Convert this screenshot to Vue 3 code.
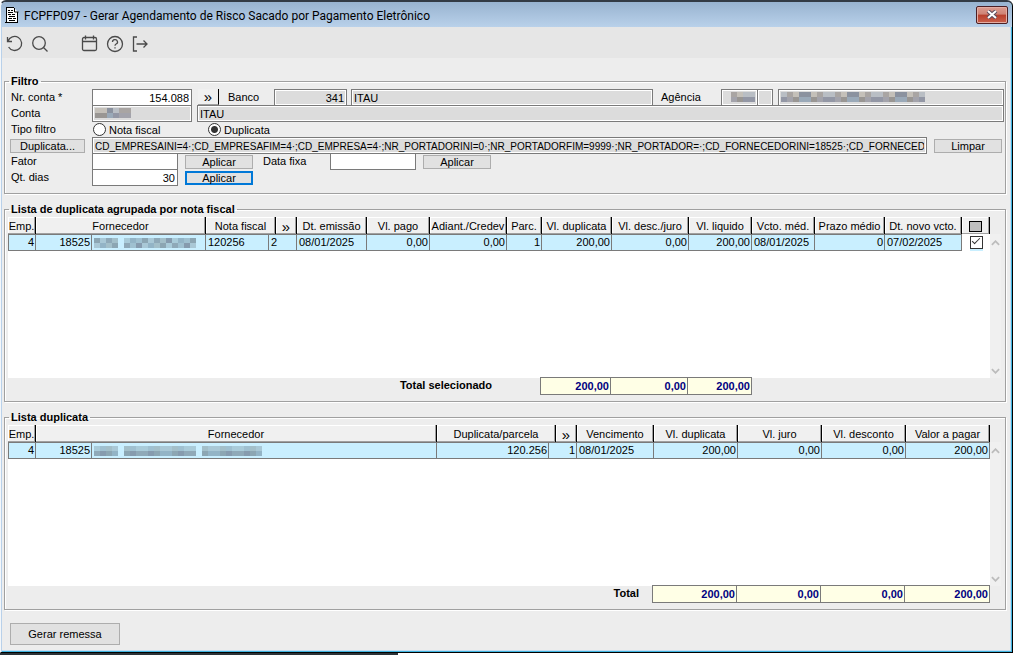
<template>
  <div class="desktop">
    <div class="window">
      <header class="title-bar">
        <svg class="doc-icon" viewBox="0 0 14 16" width="14" height="16">
          <path d="M1 1h8l4 4v10H1z" fill="#fff" />
          <path d="M1.5 0v15M0 15.5h13M12.5 5v10" stroke="#000" stroke-width="1" fill="none" />
          <path d="M1 .5h8M9.5 1v4h4" stroke="#000" fill="none" />
          <path d="M3 3.5h2M6 3.5h2M3 5.5h5M3 7.5h3M7 7.5h3M4 9.5h6M3 11.5h4M8 11.5h3M4 13.5h6" stroke="#000" />
        </svg>
        <h1>FCPFP097 - Gerar Agendamento de Risco Sacado por Pagamento Eletrônico</h1>
        <button class="close" type="button" aria-label="Fechar">
          <svg viewBox="0 0 12 9" width="12" height="9">
            <path d="M2 1l8 7M10 1L2 8" stroke="#5a4a5c" stroke-width="4" />
            <path d="M2 1l8 7M10 1L2 8" stroke="#fff" stroke-width="2" />
          </svg>
        </button>
      </header>

      <nav class="toolbar">
        <button type="button" aria-label="Desfazer">
          <svg viewBox="0 0 18 18"><path d="M1.500 2v4.500h4.500M2 6.300A7 7 0 1 1 2.600 12" /></svg>
        </button>
        <button type="button" aria-label="Pesquisar">
          <svg viewBox="0 0 18 18"><circle cx="8" cy="8" r="6.300" /><path d="M12.500 12.500l4 4" /></svg>
        </button>
        <button class="spaced" type="button" aria-label="Agenda">
          <svg viewBox="0 0 18 18"><rect x="1.500" y="2.500" width="14" height="13" rx="1.500" /><path d="M1.500 6.500h14M4.500 .5v4M12.500 .5v4" /></svg>
        </button>
        <button type="button" aria-label="Ajuda">
          <svg viewBox="0 0 18 18"><circle cx="9" cy="9" r="7.500" /><path d="M6.500 7a2.500 2.300 0 1 1 3.600 2Q9 9.600 9 10.700M9 12.200v1.300" /></svg>
        </button>
        <button type="button" aria-label="Sair">
          <svg viewBox="0 0 18 18"><path d="M6 2H2.500v14H6M5.500 9h10.500M12.500 5.500L16 9l-3.500 3.500" /></svg>
        </button>
      </nav>

      <main>
        <fieldset class="filter">
          <legend>Filtro</legend>
          <div class="row">
            <label class="caption" for="nr-conta">Nr. conta *</label>
            <input id="nr-conta" v-model="filtro.nrConta" class="num w-conta">
            <button class="more" type="button">»</button>
            <label class="lbl-banco" for="banco">Banco</label>
            <input id="banco" class="num w-banco" value="341" readonly>
            <input class="grow gap" value="ITAU" aria-label="Nome do banco" readonly>
            <span class="lbl-agencia">Agência</span>
            <div class="masked w-agencia">
              <svg class="mosaic" width="24" height="12">
                <rect v-for="(c, i) in mosaic(4, 1)" :key="i" v-bind="c" />
              </svg>
            </div>
            <div class="masked w-digito"></div>
            <div class="masked w-nome">
              <svg class="mosaic" width="144" height="12">
                <rect v-for="(c, i) in mosaic(24, 3)" :key="i" v-bind="c" />
              </svg>
            </div>
          </div>
          <div class="row">
            <span class="caption">Conta</span>
            <div class="masked w-conta">
              <svg class="mosaic" width="36" height="12">
                <rect v-for="(c, i) in mosaic(6, 5)" :key="i" v-bind="c" />
              </svg>
            </div>
            <input class="grow after-conta" value="ITAU" aria-label="Nome da conta" readonly>
          </div>
          <div class="row">
            <span class="caption">Tipo filtro</span>
            <label class="radio"><input v-model="filtro.tipo" type="radio" value="nota">Nota fiscal</label>
            <label class="radio"><input v-model="filtro.tipo" type="radio" value="duplicata">Duplicata</label>
          </div>
          <div class="row selection">
            <div class="caption"><button class="btn w-duplicata" type="button">Duplicata...</button></div>
            <input class="grow" :value="selecao" aria-label="Duplicata" readonly>
            <button class="btn w-btn after-field" type="button">Limpar</button>
          </div>
          <div class="row">
            <label class="caption" for="fator">Fator</label>
            <input id="fator" v-model="filtro.fator" class="num w-valor">
            <button class="btn w-btn after-field" type="button">Aplicar</button>
            <label class="lbl-data" for="data-fixa">Data fixa</label>
            <input id="data-fixa" v-model="filtro.dataFixa" class="w-valor">
            <button class="btn w-btn after-field" type="button">Aplicar</button>
          </div>
          <div class="row">
            <label class="caption" for="dias">Qt. dias</label>
            <input id="dias" v-model="filtro.dias" class="num w-valor">
            <button class="btn w-btn after-field active" type="button">Aplicar</button>
          </div>
        </fieldset>

        <fieldset class="list">
          <legend>Lista de duplicata agrupada por nota fiscal</legend>
          <div class="grid">
            <div class="sheet">
              <table>
                <colgroup>
                  <col class="c28"><col class="c56"><col><col class="c63"><col class="c7"><col class="c21">
                  <col class="c70"><col class="c63"><col class="c77"><col class="c35"><col class="c70"><col class="c77">
                  <col class="c63"><col class="c63"><col class="c70"><col class="c77"><col class="c28">
                </colgroup>
                <thead>
                  <tr>
                    <th v-for="h in notaHeaders" :key="h.text" :colspan="h.span || 1" :class="{ arrows: h.text === '»' }">{{ h.text }}</th>
                    <th><button class="select-all" type="button" aria-label="Selecionar todas"></button></th>
                  </tr>
                </thead>
                <tbody>
                  <tr v-for="n in notas" :key="n.nota">
                    <td class="num">{{ n.emp }}</td>
                    <td class="num">{{ n.fornecedor }}</td>
                    <td>
                      <svg class="mosaic" width="104" height="12">
                        <rect v-for="(c, i) in mosaic(18, 2, true)" :key="i" v-bind="c" />
                      </svg>
                    </td>
                    <td>{{ n.nota }}</td>
                    <td colspan="2">{{ n.serie }}</td>
                    <td>{{ n.emissao }}</td>
                    <td class="num">{{ n.pago }}</td>
                    <td class="num">{{ n.adiant }}</td>
                    <td class="num">{{ n.parc }}</td>
                    <td class="num">{{ n.duplicata }}</td>
                    <td class="num">{{ n.desc }}</td>
                    <td class="num">{{ n.liquido }}</td>
                    <td>{{ n.vctoMedio }}</td>
                    <td class="num">{{ n.prazo }}</td>
                    <td>{{ n.novoVcto }}</td>
                    <td class="check"><input v-model="n.selected" type="checkbox" aria-label="Selecionar"></td>
                  </tr>
                </tbody>
              </table>
            </div>
            <div class="scroll">
              <svg viewBox="0 0 10 6"><path d="M1 5l4-4 4 4" /></svg>
              <svg viewBox="0 0 10 6"><path d="M1 1l4 4 4-4" /></svg>
            </div>
          </div>
          <div class="totals selected">
            <strong>Total selecionado</strong>
            <output class="t71">200,00</output>
            <output class="t77">0,00</output>
            <output class="t64">200,00</output>
          </div>
        </fieldset>

        <fieldset class="list">
          <legend>Lista duplicata</legend>
          <div class="grid">
            <div class="sheet">
              <table>
                <colgroup>
                  <col class="c28"><col class="c56"><col><col class="c112"><col class="c7"><col class="c21">
                  <col class="c77"><col class="c84"><col class="c84"><col class="c84"><col class="c84">
                </colgroup>
                <thead>
                  <tr>
                    <th v-for="h in duplicataHeaders" :key="h.text" :colspan="h.span || 1" :class="{ arrows: h.text === '»' }">{{ h.text }}</th>
                  </tr>
                </thead>
                <tbody>
                  <tr v-for="d in duplicatas" :key="d.numero">
                    <td class="num">{{ d.emp }}</td>
                    <td class="num">{{ d.fornecedor }}</td>
                    <td>
                      <svg class="mosaic" width="168" height="12">
                        <rect v-for="(c, i) in mosaic(28, 3, true)" :key="i" v-bind="c" />
                      </svg>
                    </td>
                    <td class="num">{{ d.numero }}</td>
                    <td class="num" colspan="2">{{ d.parcela }}</td>
                    <td>{{ d.vencimento }}</td>
                    <td class="num">{{ d.valor }}</td>
                    <td class="num">{{ d.juro }}</td>
                    <td class="num">{{ d.desconto }}</td>
                    <td class="num">{{ d.pagar }}</td>
                  </tr>
                </tbody>
              </table>
            </div>
            <div class="scroll">
              <svg viewBox="0 0 10 6"><path d="M1 5l4-4 4 4" /></svg>
              <svg viewBox="0 0 10 6"><path d="M1 1l4 4 4-4" /></svg>
            </div>
          </div>
          <div class="totals all">
            <strong>Total</strong>
            <output class="t85">200,00</output>
            <output class="t84">0,00</output>
            <output class="t84">0,00</output>
            <output class="t85">200,00</output>
          </div>
        </fieldset>

        <button class="btn send" type="button">Gerar remessa</button>
      </main>
    </div>
    <div class="behind"></div>
  </div>
</template>

<script setup>
import { reactive, ref } from 'vue';

const filtro = reactive({
  nrConta: '154.088',
  tipo: 'duplicata',
  fator: '',
  dataFixa: '',
  dias: '30'
});

const selecao = 'CD_EMPRESAINI=4·;CD_EMPRESAFIM=4·;CD_EMPRESA=4·;NR_PORTADORINI=0·;NR_PORTADORFIM=9999·;NR_PORTADOR=·;CD_FORNECEDORINI=18525·;CD_FORNECED';

const notaHeaders = [
  { text: 'Emp.' },
  { text: 'Fornecedor', span: 2 },
  { text: 'Nota fiscal', span: 2 },
  { text: '»' },
  { text: 'Dt. emissão' },
  { text: 'Vl. pago' },
  { text: 'Adiant./Credev' },
  { text: 'Parc.' },
  { text: 'Vl. duplicata' },
  { text: 'Vl. desc./juro' },
  { text: 'Vl. liquido' },
  { text: 'Vcto. méd.' },
  { text: 'Prazo médio' },
  { text: 'Dt. novo vcto.' }
];

const duplicataHeaders = [
  { text: 'Emp.' },
  { text: 'Fornecedor', span: 2 },
  { text: 'Duplicata/parcela', span: 2 },
  { text: '»' },
  { text: 'Vencimento' },
  { text: 'Vl. duplicata' },
  { text: 'Vl. juro' },
  { text: 'Vl. desconto' },
  { text: 'Valor a pagar' }
];

const notas = ref([
  {
    emp: 4,
    fornecedor: 18525,
    nota: '120256',
    serie: 2,
    emissao: '08/01/2025',
    pago: '0,00',
    adiant: '0,00',
    parc: 1,
    duplicata: '200,00',
    desc: '0,00',
    liquido: '200,00',
    vctoMedio: '08/01/2025',
    prazo: 0,
    novoVcto: '07/02/2025',
    selected: true
  }
]);

const duplicatas = ref([
  {
    emp: 4,
    fornecedor: 18525,
    numero: '120.256',
    parcela: 1,
    vencimento: '08/01/2025',
    valor: '200,00',
    juro: '0,00',
    desconto: '0,00',
    pagar: '200,00'
  }
]);

const greys = ['#9397a5', '#a9a5a3', '#999693', '#b9bec4', '#9aa9b8', '#c4c0b9', '#a3a3ab', '#8b929f'];
const blues = ['#8fa9b8', '#9fc0d0', '#8ca6b3', '#a9cbd9', '#93b4c6', '#a3bfc9', '#869bae', '#a9c8d6'];

// masked names: two rows of 6px blocks
function mosaic(cols, seed, blue = false) {
  const palette = blue ? blues : greys;
  const cells = [];
  for (let y = 0; y < 2; y++) {
    for (let x = 0; x < cols; x++) {
      // gaps between words
      if (blue && (x === 4 || x === 17)) continue;
      cells.push({
        x: x * 6,
        y: y * 5 + 1,
        width: 6,
        height: 5,
        fill: palette[(x * x * seed + x * 3 + y * 5 + seed) % palette.length]
      });
    }
  }
  return cells;
}
</script>

<style>
body {
  background: #fff;
}
</style>

<style scoped>
.desktop {
  font: 11px/14px "Liberation Sans", Arial, sans-serif;
  color: #000;
}

button,
input {
  box-sizing: border-box;
  margin: 0;
  padding: 0;
  font: inherit;
  color: inherit;
  border-radius: 0;
}

.window {
  margin-right: 1px;
  border: 1px solid #000;
  border-top: 2px solid #333b45;
  border-left-color: #f4f7fa;
  border-radius: 6px 6px 0 0;
  background: #ededed;
  box-shadow: inset 1px 0 #b9d1ea, inset -1px -1px #3fb4e0, inset -2px -2px #c5dcf0;
}

/* title bar */
.title-bar {
  display: flex;
  align-items: center;
  height: 25px;
  padding: 0 4px;
  border-radius: 5px 5px 0 0;
  background: linear-gradient(#98b3d0, #b9d1ea);
}
h1 {
  flex: 1;
  margin: 2px 0 0 5px;
  font: 12px/20px Roboto, "Open Sans", sans-serif;
  white-space: nowrap;
}
.close {
  display: flex;
  align-items: center;
  justify-content: center;
  width: 32px;
  height: 18px;
  border: 1px solid #4d1f24;
  border-radius: 2px;
  background: linear-gradient(#dc9c90, #cf8375 45%, #b83f2c 50%, #c9614d);
  box-shadow: inset 0 0 0 1px #e4ada3;
}

/* toolbar */
.toolbar {
  display: flex;
  align-items: center;
  gap: 7px;
  height: 31px;
  margin: 0 2px 0 1px;
  padding: 2px 4px 0;
  box-sizing: border-box;
  background: #e6e6e6;
}
.toolbar button {
  width: 18px;
  height: 18px;
  border: 0;
  background: none;
}
.toolbar .spaced {
  margin-left: 25px;
}
.toolbar svg {
  display: block;
  width: 18px;
  height: 18px;
  fill: none;
  stroke: #4a4a4a;
  stroke-width: 1.3;
}

main {
  padding: 16px 6px 7px 3px;
}

fieldset {
  min-width: 0;
  margin: 0;
  padding: 0 0 0 5px;
  border: 1px solid #a0a0a0;
  box-shadow: 1px 1px #fff, inset 1px 1px #fff;
}
legend {
  padding: 0 2px;
  margin-left: -1px;
  font-weight: bold;
  line-height: 14px;
}

/* filter */
.filter {
  height: 120px;
  padding-right: 1px;
  box-sizing: border-box;
}
.row {
  display: flex;
  align-items: flex-start;
  height: 16px;
}
.row:nth-of-type(1) {
  margin-top: 1px;
}
.row input:not([type="radio"]),
.masked {
  box-sizing: border-box;
  height: 17px;
  padding: 1px 2px 0;
  border: 1px solid #7a7a7a;
  background: #fff;
  flex: none;
  min-width: 0;
}
.row input[readonly],
.masked {
  background: #dcdcdc;
  box-shadow: inset 0 0 0 1px #fff;
}
.row input.grow {
  flex: 1;
}
.selection {
  padding-right: 2px;
}
.selection input {
  font-size: 10px;
}
.num {
  text-align: right;
}
.caption {
  flex: none;
  width: 81px;
  padding-left: 1px;
  line-height: 16px;
}
.w-conta {
  width: 100px;
}
.w-banco {
  width: 73px;
}
.w-agencia {
  width: 37px;
}
.masked.w-agencia {
  padding-left: 9px;
}
.w-digito {
  width: 16px;
  margin-left: -1px;
}
.w-nome {
  width: 226px;
  margin-left: 5px;
}
.w-valor {
  width: 86px;
}
.w-btn {
  width: 68px;
}
.w-duplicata {
  width: 75px;
  margin-left: -1px;
}
.gap {
  margin-left: 4px;
}
.after-conta {
  margin-left: 5px;
}
.after-field {
  margin-left: 7px;
}
.lbl-banco,
.lbl-agencia,
.lbl-data {
  flex: none;
  line-height: 16px;
}
.lbl-banco {
  width: 46px;
  margin-left: 9px;
}
.lbl-agencia {
  width: 60px;
  margin-left: 8px;
}
.lbl-data {
  width: 67px;
  margin-left: 10px;
}
.more {
  width: 21px;
  height: 16px;
  margin-left: 6px;
  border: 0;
  border-right: 1px solid #000;
  border-bottom: 1px solid #a0a0a0;
  background: #f0f0f0;
  font-size: 15px;
  line-height: 14px;
}
.mosaic {
  display: block;
}
.btn {
  height: 14px;
  margin-top: 2px;
  border: 1px solid #adadad;
  background: #e1e1e1;
  line-height: 12px;
}
.btn.active {
  border: 2px solid #0078d7;
  line-height: 10px;
}
.radio {
  display: flex;
  align-items: center;
  gap: 3px;
  width: 114px;
  height: 17px;
  padding-left: 1px;
}
.radio input {
  appearance: none;
  width: 13px;
  height: 13px;
  border: 1px solid #333;
  border-radius: 50%;
  background: #fff;
}
.radio input:checked {
  background: radial-gradient(circle, #333 0 3px, #fff 4px);
}

/* lists */
.list {
  height: 200px;
  margin-top: 8px;
  padding: 0 4px 0 3px;
  box-sizing: border-box;
}
.list legend {
  margin-left: 1px;
}
.grid {
  display: flex;
  height: 161px;
  margin-top: 1px;
  background: linear-gradient(#ededed 17px, #fff 17px);
}
.sheet {
  flex: 1;
  min-width: 0;
}
table {
  width: 100%;
  table-layout: fixed;
  border-collapse: separate;
  border-spacing: 0;
}
.c7 { width: 7px; }
.c21 { width: 21px; }
.c28 { width: 28px; }
.c35 { width: 35px; }
.c56 { width: 56px; }
.c63 { width: 63px; }
.c70 { width: 70px; }
.c77 { width: 77px; }
.c84 { width: 84px; }
.c112 { width: 112px; }
th {
  height: 15px;
  padding: 2px 0 0;
  border-right: 1px solid #000;
  box-shadow: inset -1px -1px #a0a0a0, inset 1px 1px #fff;
  background: #f0f0f0;
  font-weight: normal;
  line-height: 15px;
  white-space: nowrap;
}
.arrows {
  font-size: 15px;
  line-height: 13px;
}
td {
  height: 15px;
  padding: 0 1px 0 2px;
  border: solid #7a7a7a;
  border-width: 1px 1px 1px 0;
  background: #c9efff;
  line-height: 15px;
  white-space: nowrap;
}
td:first-child {
  border-left-width: 1px;
}
.check {
  border-width: 0;
  padding: 0;
  background: #fff;
  text-align: center;
}
.check input {
  display: block;
  appearance: none;
  width: 13px;
  height: 13px;
  margin: 0 auto;
  border: 1px solid #333;
  background: #fff;
  box-shadow: 0 2px #c9efff;
}
.check input:checked::before {
  content: "";
  display: block;
  width: 8px;
  height: 4px;
  margin: 1px 0 0 1px;
  border: solid #333;
  border-width: 0 0 1px 1px;
  box-sizing: border-box;
  transform: rotate(-45deg);
}
.select-all {
  display: block;
  width: 13px;
  height: 11px;
  margin: 0 auto;
  border: 1px solid #000;
  background: #c0c0c0;
}
.scroll {
  display: flex;
  flex-direction: column;
  align-items: center;
  justify-content: space-between;
  width: 11px;
  margin-top: 17px;
  padding: 6px 0 4px;
  box-sizing: border-box;
  background: #f0f0f0;
}
.scroll svg {
  width: 9px;
  height: 6px;
  fill: none;
  stroke: #bcbcbc;
  stroke-width: 2;
}
.totals {
  display: flex;
  justify-content: flex-end;
  margin-top: -1px;
  font-weight: bold;
}
.totals.selected {
  padding-right: 249px;
}
.totals.all {
  padding-right: 11px;
}
.totals strong {
  margin-right: 48px;
  line-height: 17px;
}
.totals.all strong {
  margin-right: 13px;
}
.totals output {
  box-sizing: border-box;
  height: 18px;
  padding: 0 1px;
  border: 1px solid #7a7a7a;
  border-left-width: 0;
  background: #ffffe6;
  color: #000080;
  line-height: 16px;
  text-align: right;
}
.totals strong + output {
  border-left-width: 1px;
}
.t64 { width: 64px; }
.t71 { width: 71px; }
.t77 { width: 77px; }
.t84 { width: 84px; }
.t85 { width: 85px; }

.send {
  display: block;
  width: 110px;
  height: 22px;
  margin: 13px 0 0 6px;
  line-height: 20px;
}

.behind {
  width: 398px;
  height: 2px;
  background: #2b3338;
}
</style>
